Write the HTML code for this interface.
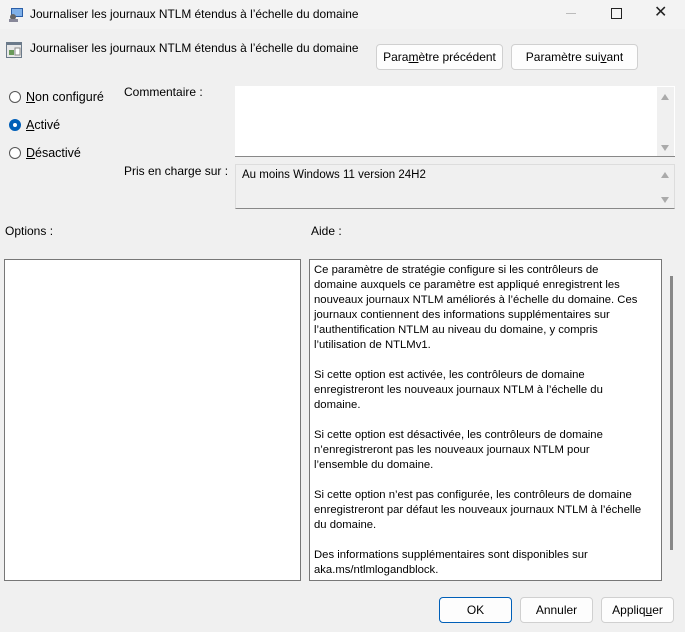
<!DOCTYPE html><html><head><meta charset="utf-8"><style>
body{margin:0;width:685px;height:632px;background:#f0f0f0;font-family:"Liberation Sans",sans-serif;font-size:12px;color:#000;position:relative;overflow:hidden}
.a{position:absolute}
.btn{position:absolute;background:#fdfdfd;border:1px solid #d0d0d0;border-radius:4px;text-align:center;font-size:12px;box-sizing:border-box}
.rad{position:absolute;width:12px;height:12px;border:1px solid #555;border-radius:50%;background:#fff;box-sizing:border-box}
.sa{position:absolute;width:0;height:0;border-left:4px solid transparent;border-right:4px solid transparent}
</style></head><body>
<div class="a" style="left:0;top:0;width:685px;height:29px;background:#f3f3f3"></div>
<svg class="a" style="left:8px;top:7px" width="16" height="16"><rect x="3" y="1" width="12" height="9" fill="#2a5ea8"/><rect x="4" y="2" width="10" height="7" fill="#7fb0e8"/><circle cx="5" cy="10" r="3" fill="#666"/><rect x="1" y="12" width="9" height="3" fill="#889"/></svg>
<div class="a" style="left:30px;top:7px;font-size:11.9px">Journaliser les journaux NTLM étendus à l’échelle du domaine</div>
<div class="a" style="left:566px;top:13px;width:10px;height:1px;background:#bbb"></div>
<div class="a" style="left:611px;top:8px;width:9px;height:9px;border:1px solid #222"></div>
<div class="a" style="left:654px;top:2px;font-size:16px;color:#222">✕</div>
<svg class="a" style="left:6px;top:42px" width="16" height="16"><rect x="0" y="0" width="16" height="16" fill="#6b7a8a"/><rect x="1" y="3" width="14" height="12" fill="#e8e8e8"/><rect x="3" y="8" width="5" height="5" fill="#6a9a5a"/><rect x="9" y="6" width="5" height="7" fill="#fff" stroke="#888"/></svg>
<div class="a" style="left:30px;top:41px;font-size:11.9px">Journaliser les journaux NTLM étendus à l’échelle du domaine</div>
<div class="btn" style="left:376px;top:44px;width:127px;height:26px;line-height:24px">Para<u>m</u>ètre précédent</div>
<div class="btn" style="left:511px;top:44px;width:127px;height:26px;line-height:24px">Paramètre sui<u>v</u>ant</div>
<div class="rad" style="left:9px;top:91px"></div><div class="a" style="left:26px;top:90px;font-size:12.5px"><u>N</u>on configuré</div>
<div class="rad" style="left:9px;top:119px;border:4px solid #005fb8;background:#fff"></div><div class="a" style="left:26px;top:118px;font-size:12.5px"><u>A</u>ctivé</div>
<div class="rad" style="left:9px;top:147px"></div><div class="a" style="left:26px;top:146px;font-size:12.5px"><u>D</u>ésactivé</div>
<div class="a" style="left:124px;top:85px">Commentaire :</div>
<div class="a" style="left:235px;top:86px;width:440px;height:70px;background:#fff;border-bottom:1px solid #888"></div>
<div class="a" style="left:657px;top:87px;width:17px;height:69px;background:#f0f0f0"></div>
<div class="sa" style="left:661px;top:94px;border-bottom:6px solid #aaa"></div>
<div class="sa" style="left:661px;top:145px;border-top:6px solid #aaa"></div>
<div class="a" style="left:124px;top:164px">Pris en charge sur :</div>
<div class="a" style="left:235px;top:164px;width:440px;height:45px;background:#f0f0f0;border:1px solid #ddd;border-bottom:1px solid #888;box-sizing:border-box"></div>
<div class="a" style="left:242px;top:169px;font-size:11.5px">Au moins Windows 11 version 24H2</div>
<div class="sa" style="left:661px;top:172px;border-bottom:6px solid #aaa"></div>
<div class="sa" style="left:661px;top:197px;border-top:6px solid #aaa"></div>
<div class="a" style="left:5px;top:224px">Options :</div>
<div class="a" style="left:311px;top:224px">Aide :</div>
<div class="a" style="left:4px;top:259px;width:297px;height:322px;background:#fff;border:1px solid #777;box-sizing:border-box"></div>
<div class="a" style="left:309px;top:259px;width:353px;height:322px;background:#fff;border:1px solid #777;box-sizing:border-box"></div>
<div class="a" style="left:670px;top:276px;width:3px;height:274px;background:#888"></div>
<div class="a" style="left:314px;top:263px;width:345px;line-height:15px;font-size:11.3px;white-space:nowrap">Ce paramètre de stratégie configure si les contrôleurs de<br>domaine auxquels ce paramètre est appliqué enregistrent les<br>nouveaux journaux NTLM améliorés à l’échelle du domaine. Ces<br>journaux contiennent des informations supplémentaires sur<br>l’authentification NTLM au niveau du domaine, y compris<br>l’utilisation de NTLMv1.<br><br>Si cette option est activée, les contrôleurs de domaine<br>enregistreront les nouveaux journaux NTLM à l’échelle du<br>domaine.<br><br>Si cette option est désactivée, les contrôleurs de domaine<br>n’enregistreront pas les nouveaux journaux NTLM pour<br>l’ensemble du domaine.<br><br>Si cette option n’est pas configurée, les contrôleurs de domaine<br>enregistreront par défaut les nouveaux journaux NTLM à l’échelle<br>du domaine.<br><br>Des informations supplémentaires sont disponibles sur<br>aka.ms/ntlmlogandblock.</div>
<div class="btn" style="left:439px;top:597px;width:73px;height:26px;line-height:24px;border:1px solid #005fb8">OK</div>
<div class="btn" style="left:520px;top:597px;width:73px;height:26px;line-height:24px">Annuler</div>
<div class="btn" style="left:601px;top:597px;width:73px;height:26px;line-height:24px">Appliq<u>u</u>er</div>
</body></html>
